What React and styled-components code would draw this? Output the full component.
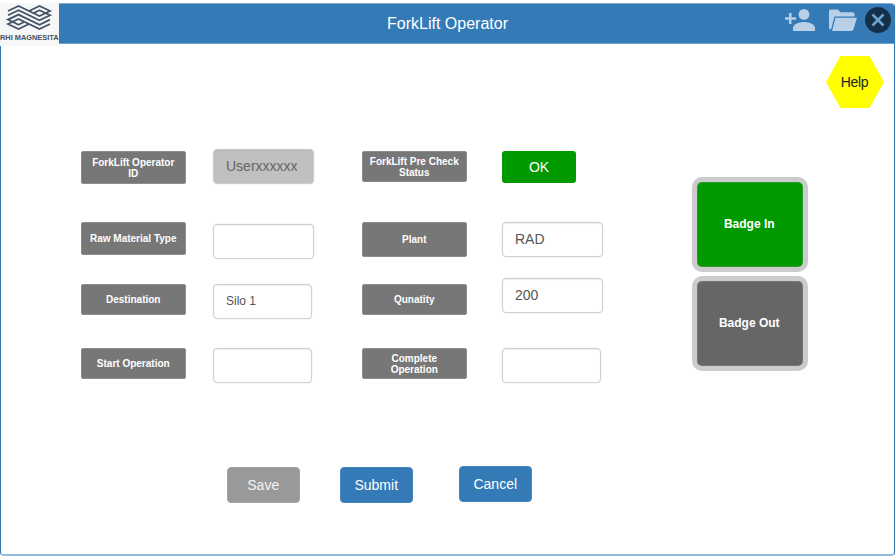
import React from "react";
import styled, { createGlobalStyle } from "styled-components";

const GlobalStyle = createGlobalStyle`
  * { box-sizing: border-box; }
  body {
    margin: 0;
    background: #fff;
    font-family: "Liberation Sans", Arial, sans-serif;
  }
`;

const Page = styled.div`
  height: 560px;
  padding-top: 3px;
  overflow: hidden;
`;

const Window = styled.main`
  position: relative;
  height: 553px;
  border: 1px solid #337ab7;
  border-top-color: #7fadd3;
  border-bottom: 2px solid #95bbdc;
  border-radius: 4px;
`;

const Header = styled.header`
  display: flex;
  align-items: center;
  justify-content: center;
  height: 40px;
  background: #337ab7;
  border-bottom: 1px solid #6ea2cf;
  border-radius: 3px 3px 0 0;
  color: #fff;
`;

const Title = styled.h1`
  margin: 0;
  font-size: 16px;
  font-weight: 400;
  line-height: 38px;
`;

const Logo = styled.svg`
  position: absolute;
  left: -1px;
  top: -1px;
  width: 59px;
  height: 43px;
  background: #f7f7f7;
`;

const HeaderIcons = styled.div`
  position: absolute;
  right: 3px;
  top: 2px;
  display: flex;
  align-items: flex-start;
`;

const UserIcon = styled.svg`
  width: 30px;
  height: 22px;
  margin: 3px 14px 0 0;
`;

const FolderIcon = styled.svg`
  width: 28px;
  height: 22px;
  margin: 3px 7px 0 0;
`;

const CloseIcon = styled.svg`
  width: 27px;
  height: 27px;
`;

const HelpRow = styled.div`
  display: flex;
  justify-content: flex-end;
  padding: 12px 10px 0 0;
`;

const Help = styled.button`
  width: 58px;
  height: 52px;
  padding: 0 1px 0 0;
  border: 0;
  background: #ff0;
  clip-path: polygon(25% 0, 75% 0, 100% 50%, 75% 100%, 25% 100%, 0 50%);
  color: #222;
  font: 14px "Liberation Sans", Arial, sans-serif;
  letter-spacing: -0.3px;
`;

const Content = styled.div`
  display: flex;
  align-items: flex-start;
  height: 358px;
  padding: 41px 0 0 79.5px;
`;

const Column = styled.div`
  display: flex;
  flex-direction: column;
  flex: none;
  width: ${(p) => p.$width}px;
  margin-right: ${(p) => p.$after}px;
`;

const Label = styled.div`
  display: flex;
  align-items: center;
  justify-content: center;
  height: ${(p) => p.$height}px;
  margin-top: ${(p) => p.$gap}px;
  padding: 0 6px;
  border: 1px solid #8d8d8d;
  border-radius: 2px;
  background: #777;
  color: #fff;
  font-size: 10px;
  font-weight: 700;
  line-height: 11px;
  text-align: center;
`;

const Field = styled.input`
  width: ${(p) => p.$width || 101}px;
  height: 35px;
  margin-top: ${(p) => p.$gap}px;
  padding: 0 12px 1px;
  border: 1px solid ${(p) => (p.disabled ? "#ccc" : "#d0d0d0")};
  border-radius: 4px;
  background: ${(p) => (p.disabled ? "#c0c0c0" : "#fff")};
  box-shadow: 0 0 0 0.5px rgba(0, 0, 0, 0.06), inset 0 1px 1px rgba(0, 0, 0, 0.06);
  color: ${(p) => (p.disabled ? "#666" : "#555")};
  font: ${(p) => p.$font || 14}px "Liberation Sans", Arial, sans-serif;
  outline: 0;
`;

const Status = styled.div`
  width: 74px;
  height: 32px;
  margin-top: 2px;
  border-radius: 3px;
  background: #009900;
  color: #fff;
  font-size: 14px;
  line-height: 32px;
  text-align: center;
`;

const Badges = styled.div`
  display: flex;
  flex-direction: column;
  gap: 3.5px;
  padding-top: 27.5px;
`;

const Badge = styled.button`
  width: 116.5px;
  height: 95.5px;
  padding: 0 1px 0 0;
  border: 5px solid #ccc;
  border-radius: 10px;
  background: ${(p) => (p.$active ? "#009900" : "#666")};
  box-shadow: inset 0 0 0 1px ${(p) => (p.$active ? "#2b9b2b" : "#777")};
  color: #fff;
  font: 700 12px "Liberation Sans", Arial, sans-serif;
`;

const Actions = styled.footer`
  display: flex;
  padding-left: 226px;
`;

const ActionButton = styled.button`
  width: 72.5px;
  height: 35.5px;
  margin: ${(p) => p.$top || 0}px ${(p) => p.$after || 0}px 0 0;
  padding: 0;
  border: 1px solid ${(p) => (p.$muted ? "#a3a3a3" : "#4585bb")};
  border-radius: 4px;
  background: ${(p) => (p.$muted ? "#999" : "#337ab7")};
  color: ${(p) => (p.$muted ? "#f3f3f3" : "#fff")};
  font: 14px "Liberation Sans", Arial, sans-serif;
`;

function CompanyLogo() {
  return (
    <Logo viewBox="0 0 59 43">
      <g fill="none" stroke="#435468" strokeWidth="1.8" strokeLinejoin="miter">
        <path d="M8 8 18.500 3 39.500 13 50 8 39.500 3 29 8" />
        <path d="M8 12.300 18.500 7.300 39.500 17.300 50 12.300 39.500 7.300 34 10" />
        <path d="M24 19 18.500 21.700 8 16.600 18.500 11.600 39.500 21.700 50 16.600" />
        <path d="M29 21 18.500 26 8 21 18.500 16 39.500 26 50 21" />
      </g>
      <text x="0" y="36.600" fill="#43515f" fontFamily="Liberation Sans, Arial, sans-serif" fontSize="7.300" fontWeight="700" textLength="58.500" lengthAdjust="spacingAndGlyphs">RHI MAGNESITA</text>
    </Logo>
  );
}

export default function App() {
  return (
    <>
      <GlobalStyle />
      <Page>
        <Window>
          <Header>
            <Title>ForkLift Operator</Title>
          </Header>
          <CompanyLogo />
          <HeaderIcons>
            <UserIcon viewBox="0 0 30 22" fill="#b8cfe5">
              <circle cx="19" cy="5.4" r="5.4" />
              <path d="M8 22v-3c0-4 6.5-6 11-6s11 2 11 6v3z" />
              <path d="M4 4h2.5v4.3H11v2.5H6.500v4.300H4v-4.300H0V8.300h4z" />
            </UserIcon>
            <FolderIcon viewBox="0 0 28 22" fill="#b8cfe5">
              <path d="M0 20V2.200Q0 .5 1.700.5H9l2.300 2.800h12.500Q25.500 3.300 25.500 5v2.500H5.500L2 20.500z" />
              <path d="M6.500 8.800H28l-3.500 11.500q-.5 1.700-2.200 1.700H3z" />
            </FolderIcon>
            <CloseIcon viewBox="0 0 27 27">
              <circle cx="14" cy="14" r="13" fill="#16304a" />
              <path d="m8.500 8.500 11 11m0-11-11 11" stroke="#6fa5d4" strokeWidth="2.500" />
            </CloseIcon>
          </HeaderIcons>
          <HelpRow>
            <Help>Help</Help>
          </HelpRow>
          <Content>
            <Column $width={105.5} $after={27}>
              <Label $gap={2} $height={33}>ForkLift Operator ID</Label>
              <Label $gap={37.5} $height={33}>Raw Material Type</Label>
              <Label $gap={29.5} $height={31}>Destination</Label>
              <Label $gap={33} $height={31}>Start Operation</Label>
            </Column>
            <Column $width={102} $after={46.5}>
              <Field $gap={0} disabled defaultValue="Userxxxxxx" />
              <Field $gap={40} />
              <Field $gap={25} $width={99} $font={12} defaultValue="Silo 1" />
              <Field $gap={29} $width={99} />
            </Column>
            <Column $width={105.5} $after={35}>
              <Label $gap={2} $height={31}>ForkLift Pre Check Status</Label>
              <Label $gap={40} $height={35}>Plant</Label>
              <Label $gap={27} $height={31}>Qunatity</Label>
              <Label $gap={33} $height={31}>Complete Operation</Label>
            </Column>
            <Column $width={102} $after={87.5}>
              <Status>OK</Status>
              <Field $gap={39} defaultValue="RAD" />
              <Field $gap={21} defaultValue="200" />
              <Field $gap={35} $width={99} />
            </Column>
            <Badges>
              <Badge $active>Badge In</Badge>
              <Badge>Badge Out</Badge>
            </Badges>
          </Content>
          <Actions>
            <ActionButton $muted $top={1} $after={40.5}>Save</ActionButton>
            <ActionButton $top={1} $after={46.5}>Submit</ActionButton>
            <ActionButton>Cancel</ActionButton>
          </Actions>
        </Window>
      </Page>
    </>
  );
}
